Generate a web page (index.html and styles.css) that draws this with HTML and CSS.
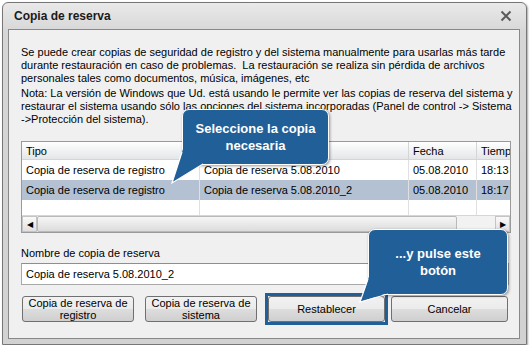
FILE: index.html
```html
<!DOCTYPE html>
<html lang="es">
<head>
    <meta charset="UTF-8">
    <title>Copia de reserva</title>
    <link rel="stylesheet" href="styles.css">
</head>
<body>
    <div class="window">
        <div class="titlebar">
            <span class="title">Copia de reserva</span>
            <svg class="close" width="12" height="12" viewBox="0 0 12 12">
                <path d="M1.5 1.5 L10.5 10.5 M10.5 1.5 L1.5 10.5" stroke="#5a5a5a" stroke-width="2" fill="none"/>
            </svg>
        </div>
        <div class="panel">
            <p class="intro">Se puede crear copias de seguridad de registro y del sistema manualmente para usarlas más tarde durante restauración en caso de problemas.&nbsp; La restauración se realiza sin pérdida de archivos personales tales como documentos, música, imágenes, etc</p>
            <p class="intro note">Nota: La versión de Windows que Ud. está usando le permite ver las copias de reserva del sistema y restaurar el sistema usando sólo las opciones del sistema incorporadas (Panel de control -&gt; Sistema -&gt;Protección del sistema).</p>

            <div class="list">
                <div class="row head">
                    <div class="cell c1">Tipo</div>
                    <div class="cell c2"></div>
                    <div class="cell c3">Fecha</div>
                    <div class="cell c4">Tiempo</div>
                </div>
                <div class="row">
                    <div class="cell c1">Copia de reserva de registro</div>
                    <div class="cell c2">Copia de reserva 5.08.2010</div>
                    <div class="cell c3">05.08.2010</div>
                    <div class="cell c4">18:13</div>
                </div>
                <div class="row selected">
                    <div class="cell c1">Copia de reserva de registro</div>
                    <div class="cell c2">Copia de reserva 5.08.2010_2</div>
                    <div class="cell c3">05.08.2010</div>
                    <div class="cell c4">18:17</div>
                </div>
                <div class="row empty">
                    <div class="cell c1"></div>
                    <div class="cell c2"></div>
                    <div class="cell c3"></div>
                    <div class="cell c4"></div>
                </div>
                <div class="hscroll">
                    <div class="arrow">&#9664;</div>
                    <div class="thumb"></div>
                    <div class="track"></div>
                    <div class="arrow">&#9654;</div>
                </div>
            </div>

            <label class="field-label" for="backup-name">Nombre de copia de reserva</label>
            <input class="field" id="backup-name" type="text" value="Copia de reserva 5.08.2010_2">

            <div class="buttons">
                <button class="btn">Copia de reserva de registro</button>
                <button class="btn">Copia de reserva de sistema</button>
                <div class="highlight"><button class="btn">Restablecer</button></div>
                <button class="btn">Cancelar</button>
            </div>

            <!-- hint callouts -->
            <div class="callout callout-list">
                Seleccione la copia<br>necesaria
                <svg class="tail" width="40" height="46" viewBox="0 0 40 46">
                    <polygon points="12,6 0,43 36,21" fill="#215f98"/>
                    <polyline points="10,12 0,43 31,24" fill="none" stroke="#fff" stroke-width="1.2"/>
                </svg>
            </div>
            <div class="callout callout-button">
                ...y pulse este<br>botón
                <svg class="tail" width="40" height="36" viewBox="0 0 40 36">
                    <polygon points="12,4 2,32 36,21" fill="#215f98"/>
                    <polyline points="10,9 2,32 30,24" fill="none" stroke="#fff" stroke-width="1.2"/>
                </svg>
            </div>
        </div>
    </div>
</body>
</html>
```

FILE: styles.css
```css
body {
    margin: 0;
    background: #ffffff;
    font-family: "Liberation Sans", Arial, sans-serif;
    font-size: 11px;
    color: #000;
}
.window {
    position: relative;
    margin: 2px 0 0 2px;
    width: 525px;
    height: 343px;
    box-sizing: border-box;
    border: 1px solid #777;
    border-radius: 6px 6px 0 0;
    background: linear-gradient(#e9e9e9, #d6d6d6 30px, #d2d2d2);
    display: flex;
    flex-direction: column;
    padding: 0 6px 5px 5px;
    box-shadow: 1px 1px 2px rgba(0,0,0,0.35);
}
.titlebar {
    height: 26px;
    display: flex;
    align-items: center;
    justify-content: space-between;
    padding: 0 8px 0 6px;
}
.title {
    font-weight: bold;
    font-size: 12px;
    color: #1a1a1a;
}
.panel {
    position: relative;
    flex: 1;
    border: 1px solid #888;
    background: #f0f0f0;
    padding: 16px 3px 0 12px;
}
.intro {
    margin: 0;
    line-height: 13px;
}
.note {
    margin-top: 2px;
}
.list {
    margin-top: 15px;
    width: 488px;
    border: 1px solid #9a9a9a;
    background: #fff;
}
.row {
    display: flex;
    height: 20px;
}
.row.head {
    height: 17px;
    background: linear-gradient(#ffffff, #f1f2f3 50%, #e4e6e8);
    border-bottom: 1px solid #d5d5d5;
}
.row.empty {
    height: 15px;
}
.row.selected {
    background: #b4c1d2;
}
.cell {
    box-sizing: border-box;
    padding-left: 4px;
    border-right: 1px solid #e0e0e0;
    display: flex;
    align-items: center;
    white-space: nowrap;
    overflow: hidden;
}
.head .cell {
    border-right-color: #d5d5d5;
}
.c1 { width: 178px; }
.c2 { width: 209px; }
.c3 { width: 68px; }
.c4 { width: 33px; border-right: none; }
.hscroll {
    display: flex;
    height: 16px;
    background: #eaeaea;
    border-top: 1px solid #d6d6d6;
}
.arrow {
    width: 15px;
    font-size: 8px;
    display: flex;
    align-items: center;
    justify-content: center;
    color: #000;
    background: linear-gradient(#fafafa, #e0e0e0);
    border: 1px solid #c4c4c4;
    box-sizing: border-box;
}
.thumb {
    width: 420px;
    background: linear-gradient(#f6f6f6, #dcdcdc);
    border: 1px solid #b9b9b9;
    border-radius: 2px;
    box-sizing: border-box;
}
.track {
    flex: 1;
    background: #f2f2f2;
}
.field-label {
    display: block;
    margin-top: 14px;
    line-height: 13px;
}
.field {
    display: block;
    margin-top: 3px;
    width: 488px;
    height: 22px;
    box-sizing: border-box;
    border: 1px solid #a8a8a8;
    border-top-color: #8e8e8e;
    padding: 0 4px;
    font: 11px "Liberation Sans", Arial, sans-serif;
    background: #fff;
}
.buttons {
    display: flex;
    align-items: center;
    margin-top: 8px;
}
.btn {
    height: 26px;
    box-sizing: border-box;
    border: 1px solid #707070;
    border-radius: 3px;
    background: linear-gradient(#f2f2f2, #ebebeb 48%, #dddddd 52%, #cfcfcf);
    font: 11px "Liberation Sans", Arial, sans-serif;
    line-height: 12px;
    color: #000;
    padding: 0 4px;
}
.buttons > .btn:nth-child(1) { width: 112px; margin-left: 1px; }
.buttons > .btn:nth-child(2) { width: 112px; margin-left: 11px; }
.highlight {
    margin-left: 8px;
    border: 3px solid #205f98;
    display: flex;
}
.highlight .btn {
    width: 117px;
}
.buttons > .btn:nth-child(4) { width: 117px; margin-left: 3px; }
.callout {
    position: absolute;
    background: #215f98;
    color: #fff;
    font-weight: bold;
    font-size: 13px;
    line-height: 17px;
    text-align: center;
    border: 1px solid #ffffff;
    border-radius: 7px;
    box-shadow: 1px 1px 3px rgba(0,0,0,0.4);
    display: flex;
    align-items: center;
    justify-content: center;
}
.tail {
    position: absolute;
    overflow: visible;
}
.callout-list {
    left: 173px;
    top: 79px;
    width: 145px;
    height: 54px;
}
.callout-list .tail {
    left: -11px;
    top: 30px;
}
.callout-button {
    left: 359px;
    top: 199px;
    width: 138px;
    height: 64px;
}
.callout-button .tail {
    left: -11px;
    top: 40px;
}
```
